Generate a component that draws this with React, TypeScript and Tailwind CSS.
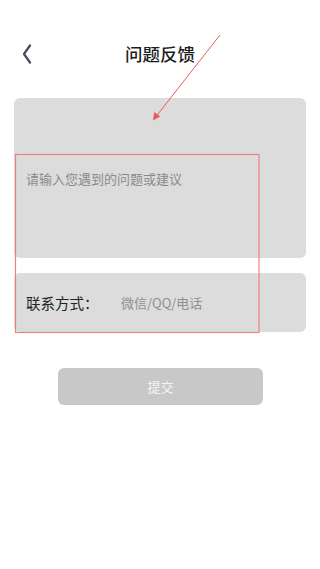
import { useState } from 'react';

function BackIcon() {
    return (
        <svg width="10" height="20" viewBox="0 0 10 20" fill="none">
            <path d="M8 1.5L2 10l6 8.5" stroke="#474a5c" strokeWidth="2.2" strokeLinecap="round" strokeLinejoin="round" />
        </svg>
    );
}

// red review marks drawn over the screen
function Annotations() {
    return (
        <svg className="absolute inset-0 pointer-events-none" width="320" height="569" viewBox="0 0 320 569">
            <rect x="15.5" y="154.5" width="243.5" height="178" fill="none" stroke="#ee8080" strokeWidth="1.2" />
            <line x1="220" y1="35" x2="156" y2="116.5" stroke="#ee5a5a" strokeWidth="1" />
            <polygon points="153,120.5 154.3,112 160.2,116.6" fill="#ee5a5a" />
        </svg>
    );
}

export default function App() {
    const [feedback, setFeedback] = useState('');
    const [contact, setContact] = useState('');

    return (
        <div className="relative w-[320px] h-[569px] bg-white overflow-hidden font-['Noto_Sans_CJK_SC','Noto_Sans',sans-serif]">
            <div className="mt-[36px] h-[36px] flex items-center px-[22px] relative">
                <BackIcon />
                <div className="absolute inset-0 flex items-center justify-center text-[17.5px] font-medium text-[#1c1c24]">
                    问题反馈
                </div>
            </div>

            <div className="px-[14px] mt-[26px] flex flex-col gap-[15px]">
                <div className="h-[160px] rounded-md bg-[#dcdcdc] pt-[72px] px-[12px]">
                    <textarea
                        value={feedback}
                        onChange={e => setFeedback(e.target.value)}
                        placeholder="请输入您遇到的问题或建议"
                        className="w-full h-[70px] resize-none bg-transparent outline-none text-[13px] leading-[18px] text-[#333] placeholder:text-[#8a8a8a]"
                    />
                </div>
                <div className="h-[59px] rounded-md bg-[#dcdcdc] flex items-center px-[12px]">
                    <span className="text-[14.5px] text-[#222] w-[95px] shrink-0">联系方式：</span>
                    <input
                        value={contact}
                        onChange={e => setContact(e.target.value)}
                        placeholder="微信/QQ/电话"
                        className="flex-1 bg-transparent outline-none text-[13px] text-[#333] placeholder:text-[#8f8f8f]"
                    />
                </div>
            </div>

            <div className="flex justify-center mt-[36px]">
                <button className="ml-[1px] w-[205px] h-[37px] rounded-md bg-[#c8c8c8] text-[13px] text-[#f4f4f4]">
                    提交
                </button>
            </div>

            <Annotations />
        </div>
    );
}
